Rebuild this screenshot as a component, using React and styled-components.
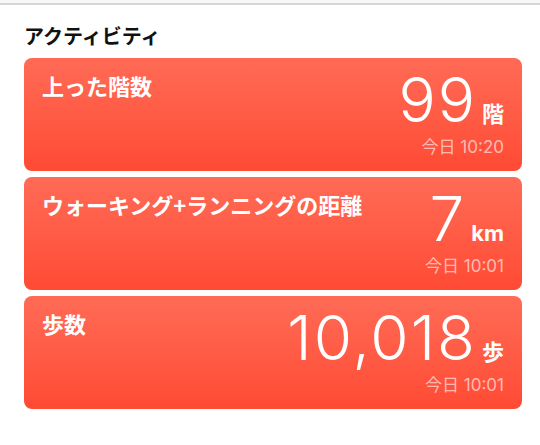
import React from "react";
import styled, { createGlobalStyle } from "styled-components";

const GlobalStyle = createGlobalStyle`
  body {
    margin: 0;
    background: #ffffff;
    font-family: "Inter", "Noto Sans CJK JP", sans-serif;
  }
`;

const activities = [
  { id: "floors", title: "上った階数", value: "99", unit: "階", time: "今日 10:20" },
  {
    id: "distance",
    title: "ウォーキング+ランニングの距離",
    value: "7",
    unit: "km",
    time: "今日 10:01",
  },
  { id: "steps", title: "歩数", value: "10,018", unit: "歩", time: "今日 10:01" },
];

const App = () => {
  return (
    <Page>
      <GlobalStyle />
      <TopEdge />
      <Heading>アクティビティ</Heading>
      <CardList>
        {activities.map((item) => (
          <Card key={item.id}>
            <Title>{item.title}</Title>
            <Figure>
              <ValueRow>
                <Value>{item.value}</Value>
                <Unit>{item.unit}</Unit>
              </ValueRow>
              <Time>{item.time}</Time>
            </Figure>
          </Card>
        ))}
      </CardList>
    </Page>
  );
};

const Page = styled.div`
  width: 540px;
  height: 445px;
  background: #ffffff;
  overflow: hidden;
`;

const TopEdge = styled.div`
  height: 3px;
  background: #f7f7f7;
  border-bottom: 2px solid #d6d6d6;
`;

const Heading = styled.h2`
  margin: 18px 0 0 24px;
  font-family: "Noto Sans CJK JP", sans-serif;
  font-size: 20px;
  font-weight: 700;
  line-height: 26px;
  color: #111111;
`;

const CardList = styled.div`
  display: flex;
  flex-direction: column;
  gap: 6px;
  margin: 9px 18px 0 24px;
`;

const Card = styled.div`
  height: 113px;
  box-sizing: border-box;
  border-radius: 8px;
  background: linear-gradient(180deg, #ff6b56 0%, #ff5a44 55%, #ff4a34 100%);
  padding: 12px 18px 0 18px;
  display: flex;
  justify-content: space-between;
  align-items: flex-start;
  color: #ffffff;
`;

const Title = styled.div`
  font-family: "Noto Sans CJK JP", sans-serif;
  font-size: 22px;
  font-weight: 700;
  line-height: 30px;
  white-space: nowrap;
`;

const Figure = styled.div`
  display: flex;
  flex-direction: column;
  align-items: flex-end;
`;

const ValueRow = styled.div`
  display: flex;
  align-items: baseline;
  gap: 5px;
  height: 60px;
`;

const Value = styled.span`
  font-family: "Inter", sans-serif;
  font-size: 62px;
  font-weight: 300;
  line-height: 60px;
  letter-spacing: 2px;
`;

const Unit = styled.span`
  font-family: "Inter", "Noto Sans CJK JP", sans-serif;
  font-size: 22px;
  font-weight: 700;
`;

const Time = styled.div`
  margin-top: 7px;
  font-family: "Inter", "Noto Sans CJK JP", sans-serif;
  font-size: 17px;
  line-height: 20px;
  color: rgba(255, 255, 255, 0.62);
`;

export default App;
